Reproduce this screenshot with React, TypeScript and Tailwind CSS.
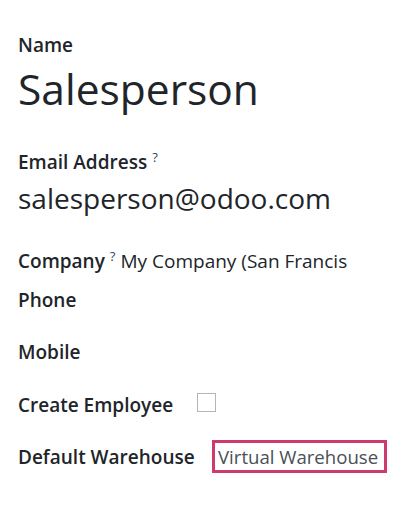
export default function App() {
  const font = { fontFamily: '"Open Sans", "Noto Sans", sans-serif' };
  return (
    <div className="w-[408px] h-[524px] bg-white text-[#212529] px-[18px] pt-[33px]" style={font}>
      <div className="text-[19px] font-semibold leading-[24px]">Name</div>
      <div className="text-[42.5px] leading-[56px] mt-[4px]">Salesperson</div>
      <div className="mt-[33px] text-[19px] font-semibold leading-[24px] flex items-start">
        <span>Email Address</span>
        <span className="text-[#2f4a66] font-normal text-[13px] leading-[14px] ml-[5px]">?</span>
      </div>
      <div className="text-[28px] leading-[38px] mt-[5px]">salesperson@odoo.com</div>
      <div className="mt-[32px] flex items-start text-[19px] leading-[24px] whitespace-nowrap">
        <span className="font-semibold">Company</span>
        <span className="text-[#2f4a66] text-[13px] leading-[14px] ml-[5px]">?</span>
        <span className="ml-[5px]">My Company (San Francis</span>
      </div>
      <div className="mt-[15px] text-[19px] font-semibold leading-[24px]">Phone</div>
      <div className="mt-[28px] text-[19px] font-semibold leading-[24px]">Mobile</div>
      <div className="mt-[29px] flex items-center">
        <span className="text-[19px] font-semibold leading-[24px] w-[179px] shrink-0">Create Employee</span>
        <span className="w-[19px] h-[19px] shrink-0 border border-[#b5b5b5] bg-white -mt-[5px]" />
      </div>
      <div className="mt-[23px] flex items-center">
        <span className="text-[19px] font-semibold leading-[24px] w-[194px] shrink-0 whitespace-nowrap">Default Warehouse</span>
        <span className="border-[3px] border-[#cc3a6e] h-[33px] w-[175px] shrink-0 flex items-center px-[3px] text-[18.6px] text-[#495057] whitespace-nowrap overflow-hidden">Virtual Warehouse</span>
      </div>
    </div>
  );
}
